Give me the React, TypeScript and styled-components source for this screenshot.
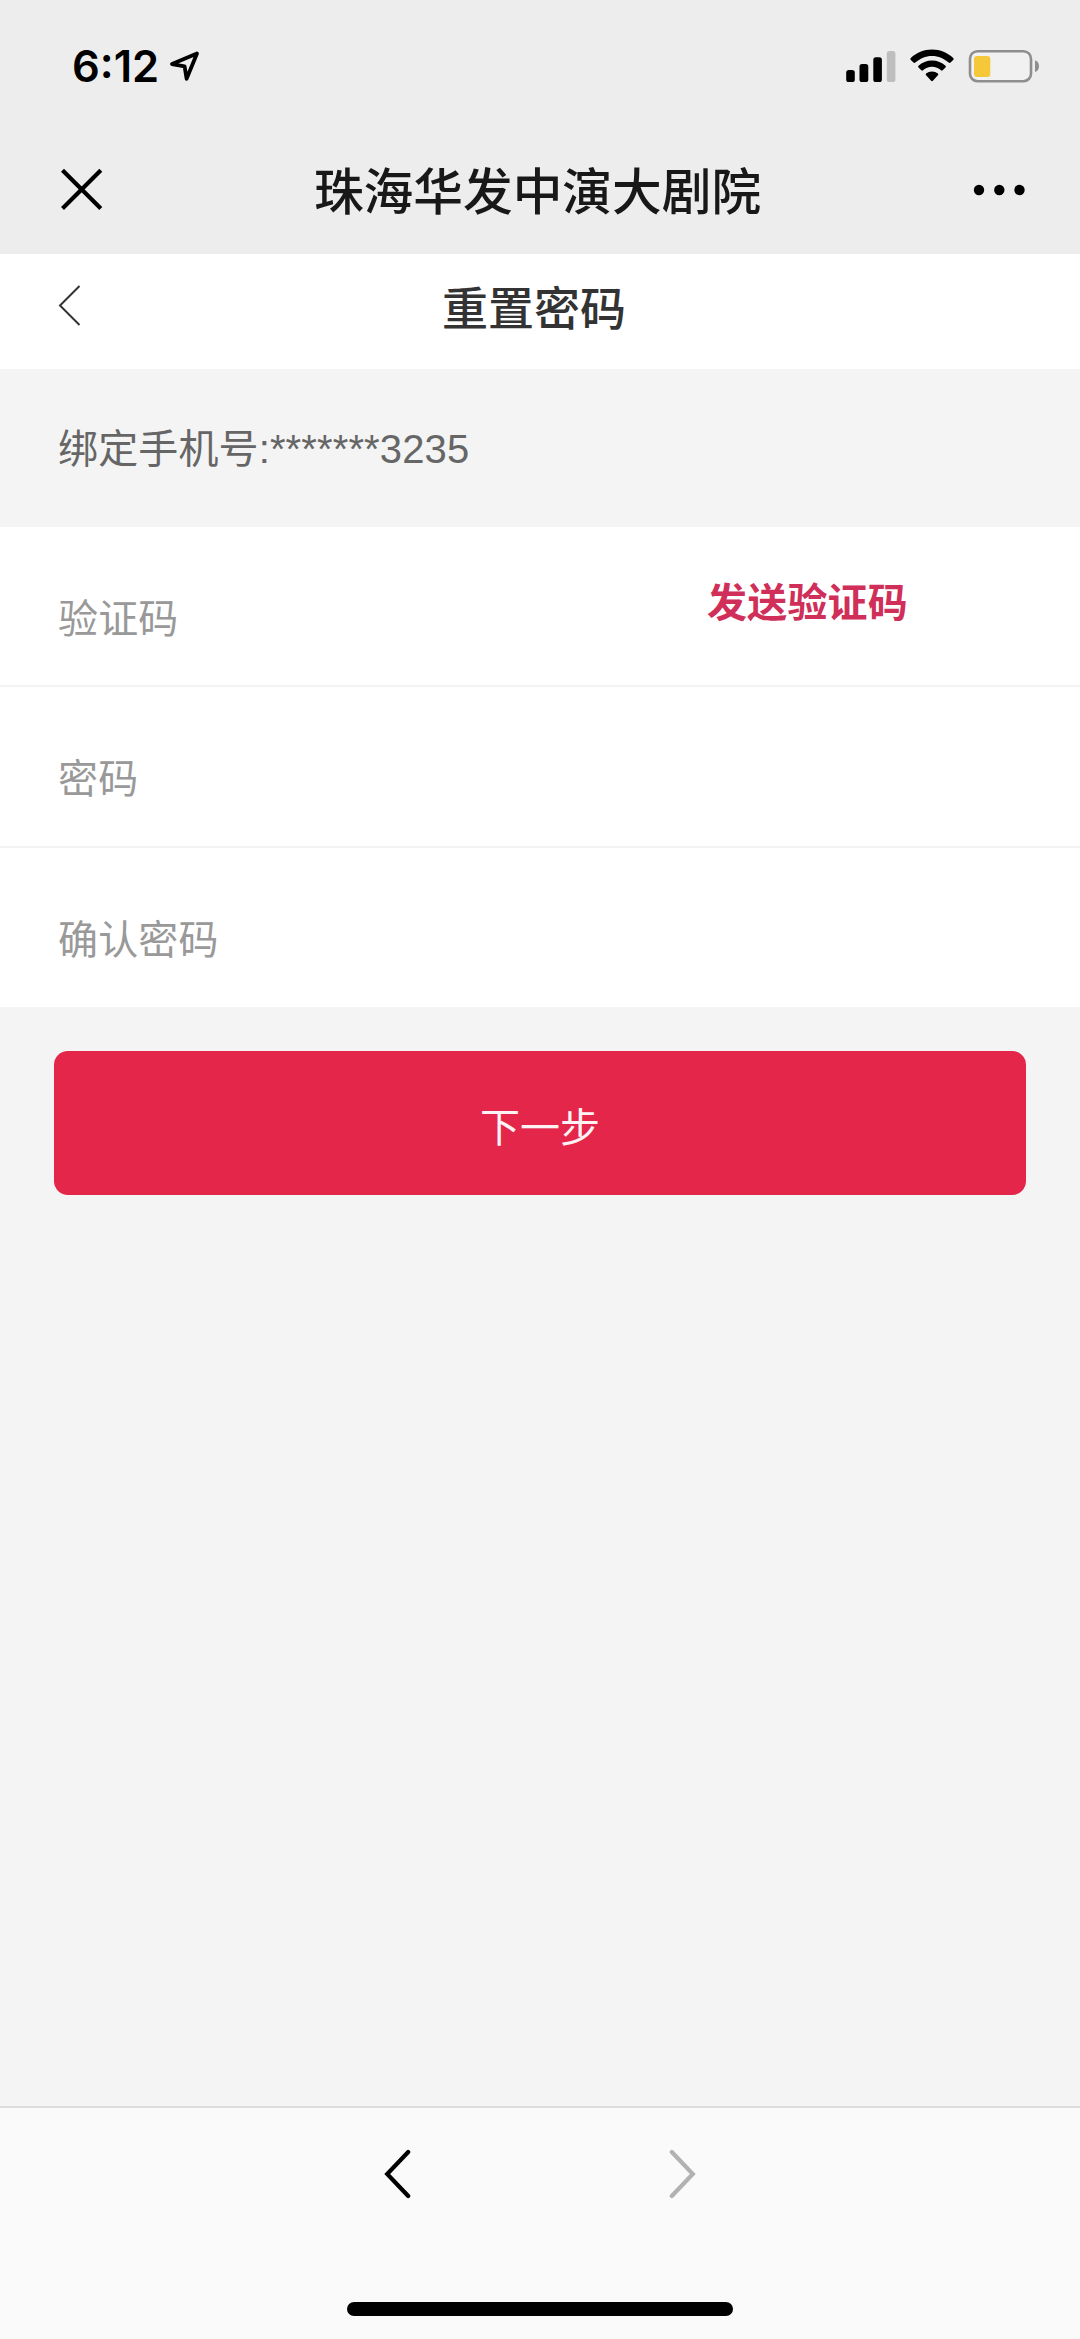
import React from 'react';
import styled, { createGlobalStyle } from 'styled-components';

const GlobalStyle = createGlobalStyle`
  * { box-sizing: border-box; }
  body {
    margin: 0;
    background: #f4f4f4;
    font-family: "Liberation Sans", "Noto Sans CJK SC", sans-serif;
  }
`;

const Screen = styled.div`
  width: 1080px;
  height: 2339px;
  display: flex;
  flex-direction: column;
  background: #f4f4f4;
  overflow: hidden;
`;

const StatusBar = styled.div`
  height: 124px;
  padding: 8px 41px 0 72px;
  display: flex;
  align-items: center;
  justify-content: space-between;
  background: #ededed;
`;

const StatusGroup = styled.div<{ $gap: number }>`
  display: flex;
  align-items: center;
  gap: ${(p) => p.$gap}px;
`;

const Time = styled.span`
  font: 600 43.5px/48px Inter, sans-serif;
  letter-spacing: 0;
  color: #000;
`;

const TopBar = styled.header`
  height: 130px;
  padding: 0 53px 0 60px;
  display: grid;
  grid-template-columns: 54px 1fr 54px;
  align-items: center;
  background: #ededed;
`;

const AppTitle = styled.h1`
  margin: 0;
  padding: 0 12px 3px 0;
  text-align: center;
  font: 500 49.7px/70px "Noto Sans CJK SC", sans-serif;
  color: #181818;
`;

const PageBar = styled.div`
  height: 115px;
  padding: 0 57px 8px;
  display: grid;
  grid-template-columns: 54px 1fr 54px;
  align-items: center;
  background: #fff;
`;

const PageTitle = styled.h2`
  margin: 0;
  padding: 0 12px 5px 0;
  text-align: center;
  font: 500 46px/66px "Noto Sans CJK SC", sans-serif;
  color: #333;
`;

const BoundPhone = styled.div`
  height: 158px;
  padding: 1px 58px 0;
  line-height: 158px;
  font-size: 40px;
  letter-spacing: 0.13px;
  color: #666;
`;

const Form = styled.div`
  background: #fff;
`;

const Field = styled.div<{ $height: number; $last?: boolean }>`
  height: ${(p) => p.$height}px;
  padding: 0 172px 0 58px;
  display: flex;
  justify-content: space-between;
  border-bottom: ${(p) => (p.$last ? 0 : 2)}px solid #f3f3f3;
`;

const Label = styled.label`
  padding-top: 63px;
  font-size: 40px;
  line-height: 58px;
  letter-spacing: 0.15px;
  color: #999;
`;

const SendCode = styled.button`
  align-self: flex-start;
  margin: 44px 0 0;
  padding: 0;
  border: 0;
  background: none;
  font: 700 40px/58px "Noto Sans CJK SC", sans-serif;
  letter-spacing: 0.2px;
  color: #cf2f58;
`;

const NextButton = styled.button`
  height: 144px;
  margin: 43.5px 54px 0;
  padding: 5px 0 0;
  border: 0;
  border-radius: 14px;
  background: #e32649;
  font: 400 40px/58px "Noto Sans CJK SC", sans-serif;
  color: #fff2f4;
`;

const BottomBar = styled.footer`
  height: 233px;
  margin-top: auto;
  padding: 40px 0 23px;
  display: flex;
  flex-direction: column;
  align-items: center;
  justify-content: space-between;
  border-top: 2px solid #dcdcdc;
  background: #fafafa;
`;

const HistoryNav = styled.nav`
  width: 314px;
  display: flex;
  justify-content: space-between;
`;

const HomeIndicator = styled.div`
  width: 386px;
  height: 14px;
  border-radius: 7px;
  background: #000;
`;

const LocationIcon = () => (
  <svg width="32" height="32" viewBox="168 50 32 32" fill="none" stroke="#000" strokeWidth="3.8" strokeLinejoin="round">
    <path d="M196 53.500 171 64.100 183.600 66.400 185.600 78.800Z" />
  </svg>
);

const SignalIcon = () => (
  <svg width="50" height="34" viewBox="846.5 49 50 34">
    <rect x="846.7" y="70" width="8.6" height="12" rx="2.6" />
    <rect x="860" y="64" width="8.8" height="18" rx="2.6" />
    <rect x="873.8" y="57.3" width="8.6" height="24.7" rx="2.6" />
    <rect x="887.3" y="51" width="8.6" height="31" rx="2.6" fill="#bebebe" />
  </svg>
);

const WifiIcon = () => (
  <svg width="44" height="34" viewBox="910 49 44 34">
    <path d="M932 49.6c8.3 0 15.6 3.2 21.2 8.5q.9.9 0 1.8l-2.7 2.7q-.9.8-1.8 0c-4.6-4.2-10.2-6.7-16.7-6.7s-12.1 2.5-16.7 6.7q-.9.8-1.8 0l-2.7-2.7q-.9-.9 0-1.8C916.4 52.8 923.7 49.6 932 49.6Z" />
    <path d="M932 60.4c5.3 0 9.9 2 13.5 5.3q.9.9 0 1.8l-2.8 2.8q-.8.8-1.7 0c-2.5-2.3-5.5-3.6-9-3.6s-6.5 1.300-9 3.600q-.9.8-1.700 0l-2.800-2.800q-.9-.9 0-1.800c3.600-3.300 8.200-5.300 13.500-5.300Z" />
    <path d="M932 71.500c2.300 0 4.300.8 5.900 2.100q.9.8 0 1.700l-5 5.500q-.9.9-1.800 0l-5-5.500q-.9-.9 0-1.700c1.600-1.300 3.600-2.100 5.900-2.100Z" />
  </svg>
);

const BatteryIcon = () => (
  <svg width="71" height="34" viewBox="968 49 71 34">
    <rect x="970" y="51.2" width="61" height="30" rx="7.5" fill="#f1f1f1" stroke="#8e8e8e" strokeWidth="2.6" />
    <rect x="974" y="56" width="16.3" height="21" rx="3" fill="#f4c838" />
    <path d="M1035 60.3c2.7.9 4 3.2 4 5.900s-1.300 5-4 5.900Z" fill="#8e8e8e" />
  </svg>
);

const CloseIcon = () => (
  <svg width="44" height="44" viewBox="0 0 44 44" stroke="#000" strokeWidth="4.2">
    <path d="M2.5 3.200 40.800 41.500M40.800 3.200 2.500 41.500" />
  </svg>
);

const MoreIcon = () => (
  <svg width="54" height="14" viewBox="0 0 54 14">
    <circle cx="6" cy="8" r="5.2" />
    <circle cx="26.3" cy="8" r="5.2" />
    <circle cx="46.5" cy="8" r="5.2" />
  </svg>
);

const BackIcon = () => (
  <svg width="24" height="50" viewBox="0 0 24 50" fill="none" stroke="#333" strokeWidth="2">
    <path d="M22.5 3 3 22.5 22.5 42" />
  </svg>
);

const HistoryIcon = ({ forward = false }: { forward?: boolean }) => (
  <svg
    width="28"
    height="52"
    viewBox="0 0 28 52"
    fill="none"
    stroke={forward ? '#b2b2b2' : '#000'}
    strokeWidth="4.2"
    strokeLinecap="round"
  >
    <path d={forward ? 'M2.8 4 23.8 26 2.8 48' : 'M25.2 4 4.2 26 25.2 48'} />
  </svg>
);

export default function App() {
  return (
    <>
      <GlobalStyle />
      <Screen>
        <StatusBar>
          <StatusGroup $gap={10}>
            <Time>6:12</Time>
            <LocationIcon />
          </StatusGroup>
          <StatusGroup $gap={14}>
            <SignalIcon />
            <WifiIcon />
            <BatteryIcon />
          </StatusGroup>
        </StatusBar>
        <TopBar>
          <CloseIcon />
          <AppTitle>珠海华发中演大剧院</AppTitle>
          <MoreIcon />
        </TopBar>
        <PageBar>
          <BackIcon />
          <PageTitle>重置密码</PageTitle>
        </PageBar>
        <BoundPhone>绑定手机号:*******3235</BoundPhone>
        <Form>
          <Field $height={160}>
            <Label>验证码</Label>
            <SendCode>发送验证码</SendCode>
          </Field>
          <Field $height={161}>
            <Label>密码</Label>
          </Field>
          <Field $height={159} $last>
            <Label>确认密码</Label>
          </Field>
        </Form>
        <NextButton>下一步</NextButton>
        <BottomBar>
          <HistoryNav>
            <HistoryIcon />
            <HistoryIcon forward />
          </HistoryNav>
          <HomeIndicator />
        </BottomBar>
      </Screen>
    </>
  );
}
